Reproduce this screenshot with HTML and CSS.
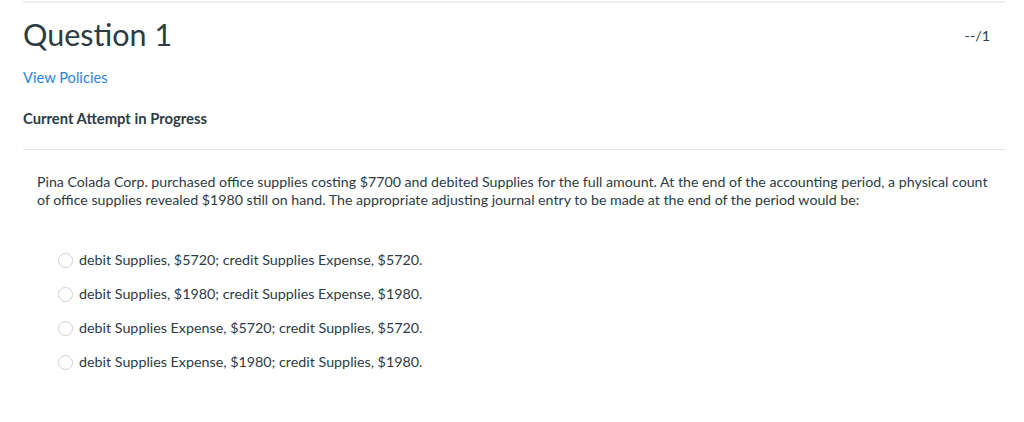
FILE: index.html
```html
<!DOCTYPE html>
<html>
<head>
<meta charset="utf-8">
<link rel="stylesheet" href="styles.css">
</head>
<body>
<div class="page">
  <div class="top-rule"></div>
  <div class="header">
    <h1 class="title">Question 1</h1>
    <div class="score">--/1</div>
  </div>
  <a class="policies" href="#">View Policies</a>
  <div class="attempt">Current Attempt in Progress</div>
  <div class="divider"></div>
  <div class="question">
    <p class="stem">Pina Colada Corp. purchased office supplies costing $7700 and debited Supplies for the full amount. At the end of the accounting period, a physical count of office supplies revealed $1980 still on hand. The appropriate adjusting journal entry to be made at the end of the period would be:</p>
    <ul class="options">
      <li class="option"><span class="radio"></span><span>debit Supplies, $5720; credit Supplies Expense, $5720.</span></li>
      <li class="option"><span class="radio"></span><span>debit Supplies, $1980; credit Supplies Expense, $1980.</span></li>
      <li class="option"><span class="radio"></span><span>debit Supplies Expense, $5720; credit Supplies, $5720.</span></li>
      <li class="option"><span class="radio"></span><span>debit Supplies Expense, $1980; credit Supplies, $1980.</span></li>
    </ul>
  </div>
</div>
</body>
</html>
```
FILE: styles.css
```css
* { box-sizing: border-box; }
html, body { margin: 0; padding: 0; background: #fff; }
body {
  font-family: Lato, "Open Sans", sans-serif;
  color: #2d3b45;
  font-size: 14px;
}
.page {
  padding: 1px 19px 0 23px;
}
.top-rule {
  height: 2px;
  background: #eeeeee;
}
.header {
  display: flex;
  justify-content: space-between;
  align-items: flex-start;
  padding-top: 13px;
}
.title {
  margin: 0;
  font-size: 30.5px;
  font-weight: 400;
  line-height: 36px;
  color: #2d3b45;
}
.score {
  margin-top: 11px;
  margin-right: 15px;
  font-size: 14.3px;
  line-height: 18px;
}
.policies {
  display: block;
  margin-top: 16px;
  font-size: 14.7px;
  line-height: 18px;
  color: #2b86d6;
  text-decoration: none;
}
.attempt {
  margin-top: 23px;
  font-size: 14.8px;
  line-height: 18px;
  font-weight: 700;
}
.divider {
  margin-top: 22px;
  height: 1px;
  background: #e6e6e6;
}
.question {
  padding: 23px 8px 0 14px;
}
.stem {
  margin: 0;
  font-size: 14.2px;
  line-height: 18px;
}
.options {
  list-style: none;
  margin: 42px 0 0 0;
  padding: 0 0 0 21px;
  display: flex;
  flex-direction: column;
  gap: 16px;
  font-size: 14.3px;
}
.option {
  display: flex;
  align-items: center;
  gap: 6px;
  line-height: 18px;
}
.radio {
  width: 15px;
  height: 15px;
  border: 1px solid #d0d0d0;
  border-radius: 50%;
  background: #fff;
  flex: none;
}
```
